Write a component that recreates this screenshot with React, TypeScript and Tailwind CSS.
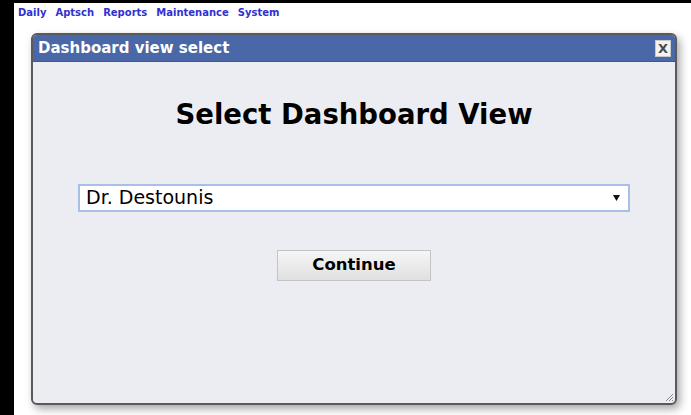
import React from "react";

const verdana = { fontFamily: '"DejaVu Sans", Verdana, sans-serif' };

export default function App() {
  return (
    <div className="w-[691px] h-[415px] bg-white flex flex-col overflow-hidden" style={verdana}>
      <div className="h-[3px] bg-black shrink-0" />
      <div className="flex flex-1 min-h-0">
        <div className="w-[14px] bg-black shrink-0" />
        <div className="flex-1 flex flex-col">
          {/* top menu */}
          <nav className="flex gap-[9px] pl-[4px] pt-[5px] h-[30px] text-[10px] font-bold text-[#3131cf] leading-none">
            <span>Daily</span>
            <span>Aptsch</span>
            <span>Reports</span>
            <span>Maintenance</span>
            <span>System</span>
          </nav>
          {/* dialog */}
          <div className="ml-[17px] w-[646px] h-[372px] border-2 border-[#5a5a5a] rounded-[6px] bg-[#ecedf3] flex flex-col overflow-hidden shadow-[3px_4px_8px_rgba(0,0,0,0.35)]">
            <div className="h-[27px] bg-[#4a67a7] border-b border-[#3d5893] flex items-center justify-between pl-[5px] pr-[4px] shrink-0">
              <span className="text-white font-bold text-[15px]">Dashboard view select</span>
              <div className="w-[16px] h-[17px] bg-[#f2f2f2] border border-[#c8c8c8] flex items-center justify-center text-[13px] font-bold text-[#4a4a4a] leading-none">
                X
              </div>
            </div>
            <div className="flex-1 flex flex-col items-center relative">
              <h1 className="mt-[39px] text-[27.5px] font-bold text-black leading-none">Select Dashboard View</h1>
              <div className="mt-[55px] w-[552px] h-[28px] bg-white border-2 border-[#a8c0e8] flex items-center justify-between pl-[6px] pr-[8px]">
                <span className="text-[19px] text-black leading-none">Dr. Destounis</span>
                <svg width="7" height="6" viewBox="0 0 7 6">
                  <path d="M0 0 H7 L3.5 6 Z" fill="#111" />
                </svg>
              </div>
              <button className="mt-[38px] w-[154px] h-[31px] border border-[#c4c4c4] bg-gradient-to-b from-[#f6f6f6] to-[#e0e0e0] text-[16.5px] font-bold text-black" style={verdana}>
                Continue
              </button>
              <svg className="absolute right-[1px] bottom-[1px]" width="10" height="10" viewBox="0 0 10 10">
                <path d="M9 2 L2 9 M9 5 L5 9 M9 8 L8 9" stroke="#888" strokeWidth="1" />
              </svg>
            </div>
          </div>
        </div>
      </div>
    </div>
  );
}
